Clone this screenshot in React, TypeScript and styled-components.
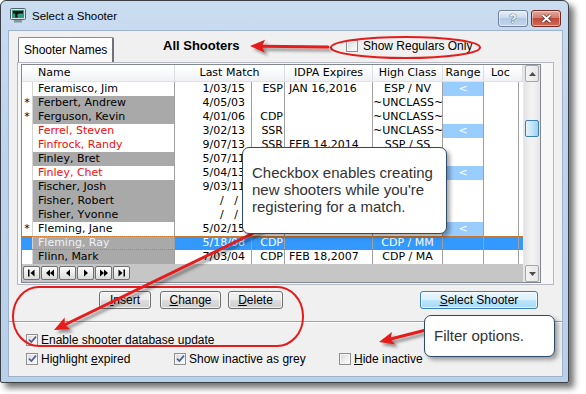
import React from 'react'
import styled, { createGlobalStyle } from 'styled-components'

const GlobalStyle = createGlobalStyle`
  html, body { margin: 0; padding: 0; background: #ffffff; }
  body {
    font-family: "Liberation Sans", Arial, sans-serif;
    font-size: 12px;
    color: #000;
  }
`

type Tone = 'plain' | 'red' | 'grey'

interface Shooter {
  star?: boolean
  name: string
  tone: Tone
  date: string
  cls: string
  idpa: string
  high: string
  range?: boolean
  selected?: boolean
}

const shooters: Shooter[] = [
  { name: 'Feramisco, Jim', tone: 'plain', date: '1/03/15', cls: 'ESP', idpa: 'JAN 16,2016', high: 'ESP / NV', range: true },
  { star: true, name: 'Ferbert, Andrew', tone: 'grey', date: '4/05/03', cls: '', idpa: '', high: '~UNCLASS~' },
  { star: true, name: 'Ferguson, Kevin', tone: 'grey', date: '4/01/06', cls: 'CDP', idpa: '', high: '~UNCLASS~' },
  { name: 'Ferrel, Steven', tone: 'red', date: '3/02/13', cls: 'SSR', idpa: '', high: '~UNCLASS~', range: true },
  { name: 'Finfrock, Randy', tone: 'red', date: '9/07/13', cls: 'SSR', idpa: 'FEB 14,2014', high: 'SSP / SS' },
  { name: 'Finley, Bret', tone: 'grey', date: '5/07/11', cls: 'ESP', idpa: '', high: 'ESP / MM' },
  { name: 'Finley, Chet', tone: 'red', date: '5/04/13', cls: 'SSR', idpa: '', high: 'SSR / MM', range: true },
  { name: 'Fischer, Josh', tone: 'grey', date: '9/03/11', cls: 'CDP', idpa: '', high: 'CDP / SS' },
  { name: 'Fisher, Robert', tone: 'grey', date: '/   /  ', cls: '', idpa: '', high: '~UNCLASS~' },
  { name: 'Fisher, Yvonne', tone: 'grey', date: '/   /  ', cls: '', idpa: '', high: '~UNCLASS~' },
  { star: true, name: 'Fleming, Jane', tone: 'plain', date: '5/02/15', cls: 'SSP', idpa: '', high: 'SSP / MM', range: true },
  { name: 'Fleming, Ray', tone: 'grey', date: '5/18/08', cls: 'CDP', idpa: '', high: 'CDP / MM', selected: true },
  { name: 'Flinn, Mark', tone: 'grey', date: '7/03/04', cls: 'CDP', idpa: 'FEB 18,2007', high: 'CDP / MA' },
]

const Stage = styled.div`
  position: relative;
  width: 586px;
  height: 394px;
  overflow: hidden;
`

const Window = styled.div`
  width: 569px;
  height: 383px;
  box-sizing: border-box;
  border: 1px solid #3b3f46;
  border-radius: 6px 6px 2px 2px;
  background: linear-gradient(180deg, #cadcf0 0%, #bed4ec 35%, #b9d0e9 100%);
  box-shadow: 5px 5px 6px rgba(0, 0, 0, 0.55);
  display: flex;
  flex-direction: column;
  padding: 0 5px 5px 7px;
`

const TitleBar = styled.div`
  height: 29px;
  display: flex;
  align-items: center;
  padding: 0 2px 0 2px;
`

const Title = styled.span`
  margin-left: 6px;
  font-size: 11.5px;
  color: #000;
`

const CaptionButtons = styled.div`
  margin-left: auto;
  display: flex;
  gap: 3px;
  align-self: flex-start;
  margin-top: 9px;
`

const CaptionButton = styled.div<{ $close?: boolean }>`
  width: 30px;
  height: 17px;
  box-sizing: border-box;
  border: 1px solid ${(p) => (p.$close ? '#6e2a24' : '#6f829a')};
  border-radius: 3px;
  background: ${(p) =>
    p.$close
      ? 'linear-gradient(180deg, #e9a89c 0%, #d27c6f 45%, #c2483a 50%, #cf6a55 100%)'
      : 'linear-gradient(180deg, #e6eef8 0%, #cbdbee 45%, #b3c9e3 50%, #c4d8ee 100%)'};
  box-shadow: inset 0 0 0 1px rgba(255, 255, 255, 0.45);
  display: flex;
  align-items: center;
  justify-content: center;
  color: #fff;
  font-weight: bold;
  font-size: 12px;
  text-shadow: 0 0 1px #2d3a4c, 0 0 1px #2d3a4c;
`

const Client = styled.div`
  flex: 1;
  background: #f0f0f0;
  border: 1px solid #9db3cc;
  display: flex;
  flex-direction: column;
`

const TopRow = styled.div`
  height: 31px;
  display: flex;
  align-items: flex-end;
  padding-left: 9px;
`

const Tab = styled.div`
  width: 96px;
  height: 25px;
  box-sizing: border-box;
  border: 1px solid #898c95;
  border-bottom: none;
  border-right: 2px solid #6f7278;
  border-radius: 2px 2px 0 0;
  background: linear-gradient(180deg, #ffffff, #f7f7f7);
  padding: 5px 0 0 5px;
  font-size: 12px;
`

const Heading = styled.div`
  width: 183px;
  margin-left: 49px;
  align-self: center;
  margin-bottom: 2px;
  font-weight: bold;
  font-size: 13px;
`

const TabPanel = styled.div`
  margin: 0 8px 0 8px;
  height: 223px;
  box-sizing: border-box;
  border: 1px solid #b5b8c0;
  padding: 1px 11px 1px 3px;
  background: #f7f7f7;
`

const ListBox = styled.div`
  width: 520px;
  height: 219px;
  box-sizing: border-box;
  border: 1px solid #828790;
  display: flex;
  background: #fff;
  font-family: "DejaVu Sans", Verdana, sans-serif;
  font-size: 11px;
`

const DataArea = styled.div`
  width: 501px;
  display: flex;
  flex-direction: column;
`

const HeaderRow = styled.div`
  display: grid;
  grid-template-columns: 153px 110px 88px 70px 41px 39px;
  height: 17px;
  box-sizing: border-box;
  border-bottom: 1px solid #e0e2e6;
  background: linear-gradient(180deg, #ffffff 0%, #f9fafb 50%, #eef0f3 100%);
`

const HeaderCell = styled.div<{ $left?: number }>`
  border-right: 1px solid #dcdde3;
  line-height: 16px;
  text-align: ${(p) => (p.$left !== undefined ? 'left' : 'center')};
  padding-left: ${(p) => p.$left ?? 0}px;
  white-space: nowrap;
  overflow: hidden;
`

const Row = styled.div<{ $selected?: boolean }>`
  display: grid;
  grid-template-columns: 11px 142px 77px 33px 88px 70px 41px 35px 4px;
  height: 14px;
  background: ${(p) => (p.$selected ? '#3399ff' : '#ffffff')};
  color: ${(p) => (p.$selected ? '#ffffff' : '#000')};
  outline: ${(p) => (p.$selected ? '1px dotted #c8792f' : 'none')};
  outline-offset: -1px;
`

const Cell = styled.div<{
  $align?: 'left' | 'right' | 'center'
  $bg?: string
  $fg?: string
  $padL?: number
  $padR?: number
  $line?: string
}>`
  box-sizing: border-box;
  height: 14px;
  line-height: 14px;
  padding: 0 ${(p) => p.$padR ?? 0}px 0 ${(p) => p.$padL ?? 0}px;
  text-align: ${(p) => p.$align ?? 'left'};
  background: ${(p) => p.$bg ?? 'transparent'};
  color: ${(p) => p.$fg ?? 'inherit'};
  border-right: 1px solid ${(p) => p.$line ?? '#a0a0a0'};
  white-space: pre;
  overflow: hidden;
`

const NavBar = styled.div`
  flex: 1;
  background: #c6c6c6;
  display: flex;
  gap: 1px;
  padding: 2px 0 0 1px;
`

const NavButton = styled.div`
  width: 17px;
  height: 14px;
  box-sizing: border-box;
  border: 1px solid #6f6f6f;
  border-radius: 2px;
  background: linear-gradient(180deg, #fbfbfb 0%, #ececec 50%, #dadada 100%);
  display: flex;
  align-items: center;
  justify-content: center;
`

const ScrollBar = styled.div`
  width: 17px;
  display: flex;
  flex-direction: column;
  background: linear-gradient(90deg, #e3e3e3, #f2f2f2 40%, #f2f2f2 60%, #e6e6e6);
  border-left: 1px solid #e8e8e8;
`

const ScrollArrow = styled.div`
  height: 17px;
  box-sizing: border-box;
  margin: 0 1px;
  border: 1px solid #a6a6a6;
  border-radius: 2px;
  background: linear-gradient(90deg, #f4f4f4, #e6e6e6);
  display: flex;
  align-items: center;
  justify-content: center;
`

const ScrollTrack = styled.div`
  flex: 1;
`

const ScrollThumb = styled.div`
  margin: 38px 1px 0 1px;
  height: 17px;
  box-sizing: border-box;
  border: 1px solid #3c7fb1;
  border-radius: 2px;
  background: linear-gradient(90deg, #e5f3fb, #c4e5f6 50%, #98d1ef);
`

const ButtonRow = styled.div`
  display: flex;
  align-items: center;
  margin-top: 6px;
  padding-left: 90px;
  padding-right: 24px;
`

const PushButton = styled.div<{ $width: number; $gap?: number; $default?: boolean }>`
  width: ${(p) => p.$width}px;
  height: 18px;
  box-sizing: border-box;
  margin-left: ${(p) => p.$gap ?? 0}px;
  border: 1px solid ${(p) => (p.$default ? '#3c7fb1' : '#707070')};
  border-radius: 3px;
  background: ${(p) =>
    p.$default
      ? 'linear-gradient(180deg, #eaf6fd 0%, #d9f0fc 49%, #bee6fd 50%, #a7d9f5 100%)'
      : 'linear-gradient(180deg, #f2f2f2 0%, #ebebeb 49%, #dddddd 50%, #cfcfcf 100%)'};
  box-shadow: inset 0 0 0 1px rgba(255, 255, 255, 0.7);
  display: flex;
  align-items: center;
  justify-content: center;
  font-size: 12px;
  &:last-child {
    margin-left: auto;
  }
`

const Separator = styled.div`
  margin-top: 12px;
  border-top: 1px solid #a0a0a0;
  border-bottom: 1px solid #ffffff;
`

const CheckRow = styled.div<{ $top: number }>`
  display: flex;
  align-items: center;
  margin-top: ${(p) => p.$top}px;
  padding-left: 17px;
  height: 13px;
`

const CheckItem = styled.label<{ $width?: number; $gap?: number }>`
  display: flex;
  align-items: center;
  gap: ${(p) => p.$gap ?? 3}px;
  width: ${(p) => (p.$width ? `${p.$width}px` : 'auto')};
  white-space: nowrap;
  font-size: 12px;
`

const RegularsCheck = styled(CheckItem)`
  align-self: center;
  margin-bottom: 2px;
`

const Box = styled.span`
  width: 12px;
  height: 12px;
  box-sizing: border-box;
  border: 1px solid #8e8f8f;
  background: linear-gradient(135deg, #d8d8d8 0%, #f0f0f0 60%, #fdfdfd 100%);
  box-shadow: inset 0 0 0 1px #f4f4f4;
  display: flex;
  align-items: center;
  justify-content: center;
  flex-shrink: 0;
`

const Callout = styled.div<{ $left: number; $top: number; $width: number; $height: number; $padTop: number }>`
  position: absolute;
  left: ${(p) => p.$left}px;
  top: ${(p) => p.$top}px;
  width: ${(p) => p.$width}px;
  height: ${(p) => p.$height}px;
  box-sizing: border-box;
  padding: ${(p) => p.$padTop}px 6px 0 9px;
  background: #ffffff;
  border: 1px solid #2c4a6e;
  border-radius: 7px;
  box-shadow: 3px 3px 4px rgba(0, 0, 0, 0.35);
  font-size: 15px;
  line-height: 17px;
  color: #333333;
  z-index: 3;
`

const Overlay = styled.svg`
  position: absolute;
  left: 0;
  top: 0;
  pointer-events: none;
  z-index: 2;
`

const Check = ({ checked }: { checked: boolean }) => (
  <Box>
    {checked ? (
      <svg width="9" height="9" viewBox="0 0 9 9">
        <path d="M1 4.6 L3.4 7 L8 1.6" fill="none" stroke="#4a5f97" strokeWidth="1.7" />
      </svg>
    ) : null}
  </Box>
)

const AppIcon = () => (
  <svg width="16" height="15" viewBox="0 0 16 15">
    <rect x="0.5" y="0.5" width="15" height="11" rx="1" fill="#d8e4e8" stroke="#55606a" />
    <rect x="2" y="2" width="12" height="8" fill="#2f9c7e" />
    <path d="M3 3 H13 V5.5 H8.5 L8 6.5 H7 L7.8 9.5 H5.2 L5.2 5.5 H3 Z" fill="#111" />
    <rect x="4" y="12" width="8" height="2.5" fill="#8a969e" />
  </svg>
)

const NavIcon = ({ kind }: { kind: 'first' | 'prev2' | 'prev' | 'next' | 'next2' | 'last' }) => {
  const left = (x: number) => `M${x + 4} 0.5 L${x} 4 L${x + 4} 7.5 Z`
  const right = (x: number) => `M${x} 0.5 L${x + 4} 4 L${x} 7.5 Z`
  const d: Record<string, string> = {
    first: `M1 0.5 H2.5 V7.5 H1 Z ${left(3.5)}`,
    prev2: `${left(1)} ${left(5)}`,
    prev: left(3),
    next: right(3),
    next2: `${right(1)} ${right(5)}`,
    last: `${right(1.5)} M6.5 0.5 H8 V7.5 H6.5 Z`,
  }
  return (
    <svg width="10" height="8" viewBox="0 0 10 8">
      <path d={d[kind]} fill="#000" />
    </svg>
  )
}

const arrowParts = (sx: number, sy: number, tx: number, ty: number, len = 15, half = 6.5) => {
  const dx = sx - tx
  const dy = sy - ty
  const dist = Math.hypot(dx, dy)
  const ux = dx / dist
  const uy = dy / dist
  const nx = -uy
  const ny = ux
  const bx = tx + ux * len
  const by = ty + uy * len
  return {
    shaft: `M${sx} ${sy} L${bx - ux * 3} ${by - uy * 3}`,
    head: `${tx},${ty} ${bx + nx * half},${by + ny * half} ${tx + ux * (len - 3)},${ty + uy * (len - 3)} ${bx - nx * half},${by - ny * half}`,
  }
}

const Arrow = ({ sx, sy, tx, ty }: { sx: number; sy: number; tx: number; ty: number }) => {
  const a = arrowParts(sx, sy, tx, ty)
  return (
    <g filter="url(#shadow)">
      <path d={a.shaft} stroke="#e41c1c" strokeWidth="3" strokeLinecap="round" fill="none" />
      <polygon points={a.head} fill="#e41c1c" />
    </g>
  )
}

const navKinds = ['first', 'prev2', 'prev', 'next', 'next2', 'last'] as const

const ShooterRow = ({ s }: { s: Shooter }) => {
  const nameBg = s.tone === 'grey' ? '#a9a9a9' : undefined
  const nameFg = s.selected ? '#eef2f8' : s.tone === 'red' ? '#f20d0d' : '#000'
  const fg = s.selected ? '#ffffff' : '#000'
  return (
    <Row $selected={s.selected}>
      <Cell $align="center" $line="#d4d4d4" $fg={fg}>
        {s.star ? '*' : ''}
      </Cell>
      <Cell $bg={nameBg} $fg={nameFg} $padL={5}>
        {s.name}
      </Cell>
      <Cell $align="right" $padR={6} $fg={fg}>
        {s.date}
      </Cell>
      <Cell $align="right" $padR={1} $fg={fg}>
        {s.cls}
      </Cell>
      <Cell $padL={4} $fg={fg}>
        {s.idpa}
      </Cell>
      <Cell $align="center" $fg={fg}>
        {s.high}
      </Cell>
      <Cell $align="center" $bg={s.range ? '#99ccff' : undefined} $fg="#ffffff">
        {s.range ? '<' : ''}
      </Cell>
      <Cell />
      <Cell $line="transparent" />
    </Row>
  )
}

const App = () => {
  return (
    <Stage>
      <GlobalStyle />
      <Window>
        <TitleBar>
          <AppIcon />
          <Title>Select a Shooter</Title>
          <CaptionButtons>
            <CaptionButton>?</CaptionButton>
            <CaptionButton $close>
              <svg width="11" height="9" viewBox="0 0 11 9">
                <path d="M1.5 1 L9.5 8 M9.5 1 L1.5 8" stroke="#4a2320" strokeWidth="3.2" />
                <path d="M1.5 1 L9.5 8 M9.5 1 L1.5 8" stroke="#fff" strokeWidth="2" />
              </svg>
            </CaptionButton>
          </CaptionButtons>
        </TitleBar>
        <Client>
          <TopRow>
            <Tab>Shooter Names</Tab>
            <Heading>All Shooters</Heading>
            <RegularsCheck $gap={5}>
              <Check checked={false} />
              <span>Show Regulars Only</span>
            </RegularsCheck>
          </TopRow>
          <TabPanel>
            <ListBox>
              <DataArea>
                <HeaderRow>
                  <HeaderCell $left={16}>Name</HeaderCell>
                  <HeaderCell>Last Match</HeaderCell>
                  <HeaderCell>IDPA Expires</HeaderCell>
                  <HeaderCell>High Class</HeaderCell>
                  <HeaderCell>Range</HeaderCell>
                  <HeaderCell $left={7}>Loc</HeaderCell>
                </HeaderRow>
                {shooters.map((s, i) => (
                  <ShooterRow key={i} s={s} />
                ))}
                <NavBar>
                  {navKinds.map((k) => (
                    <NavButton key={k}>
                      <NavIcon kind={k} />
                    </NavButton>
                  ))}
                </NavBar>
              </DataArea>
              <ScrollBar>
                <ScrollArrow>
                  <svg width="7" height="4" viewBox="0 0 7 4">
                    <path d="M0 4 L3.5 0 L7 4 Z" fill="#4d4d4d" />
                  </svg>
                </ScrollArrow>
                <ScrollTrack>
                  <ScrollThumb />
                </ScrollTrack>
                <ScrollArrow>
                  <svg width="7" height="4" viewBox="0 0 7 4">
                    <path d="M0 0 L3.5 4 L7 0 Z" fill="#4d4d4d" />
                  </svg>
                </ScrollArrow>
              </ScrollBar>
            </ListBox>
          </TabPanel>
          <ButtonRow>
            <PushButton $width={52}>
              <span>
                <u>I</u>nsert
              </span>
            </PushButton>
            <PushButton $width={61} $gap={9}>
              <span>
                <u>C</u>hange
              </span>
            </PushButton>
            <PushButton $width={55} $gap={7}>
              <span>
                <u>D</u>elete
              </span>
            </PushButton>
            <PushButton $width={118} $default>
              <span>
                <u>S</u>elect Shooter
              </span>
            </PushButton>
          </ButtonRow>
          <Separator />
          <CheckRow $top={10}>
            <CheckItem>
              <Check checked />
              <span>
                Enable shooter database <u>u</u>pdate
              </span>
            </CheckItem>
          </CheckRow>
          <CheckRow $top={6}>
            <CheckItem $width={148}>
              <Check checked />
              <span>
                Highlight <u>e</u>xpired
              </span>
            </CheckItem>
            <CheckItem $width={165}>
              <Check checked />
              <span>
                Show inactive as <u>g</u>rey
              </span>
            </CheckItem>
            <CheckItem>
              <Check checked={false} />
              <span>
                <u>H</u>ide inactive
              </span>
            </CheckItem>
          </CheckRow>
        </Client>
      </Window>
      <Overlay width="586" height="394" viewBox="0 0 586 394">
        <defs>
          <filter id="shadow" x="-20%" y="-20%" width="140%" height="160%">
            <feDropShadow dx="3" dy="3" stdDeviation="1.4" floodColor="#000" floodOpacity="0.4" />
          </filter>
        </defs>
        <ellipse cx="405.5" cy="47.5" rx="74.5" ry="10.5" fill="none" stroke="#e41c1c" strokeWidth="2" />
        <rect x="13" y="287" width="290" height="59" rx="26" ry="29" fill="none" stroke="#e41c1c" strokeWidth="2" />
        <Arrow sx={328} sy={47} tx={250} ty={46} />
        <Arrow sx={262} sy={229} tx={54} ty={330} />
        <Arrow sx={426} sy={330} tx={379} ty={342} />
      </Overlay>
      <Callout $left={242} $top={147} $width={205} $height={87} $padTop={16}>
        Checkbox enables creating
        <br />
        new shooters while you&apos;re
        <br />
        registering for a match.
      </Callout>
      <Callout $left={424} $top={315} $width={131} $height={42} $padTop={11}>
        Filter options.
      </Callout>
    </Stage>
  )
}

export default App
